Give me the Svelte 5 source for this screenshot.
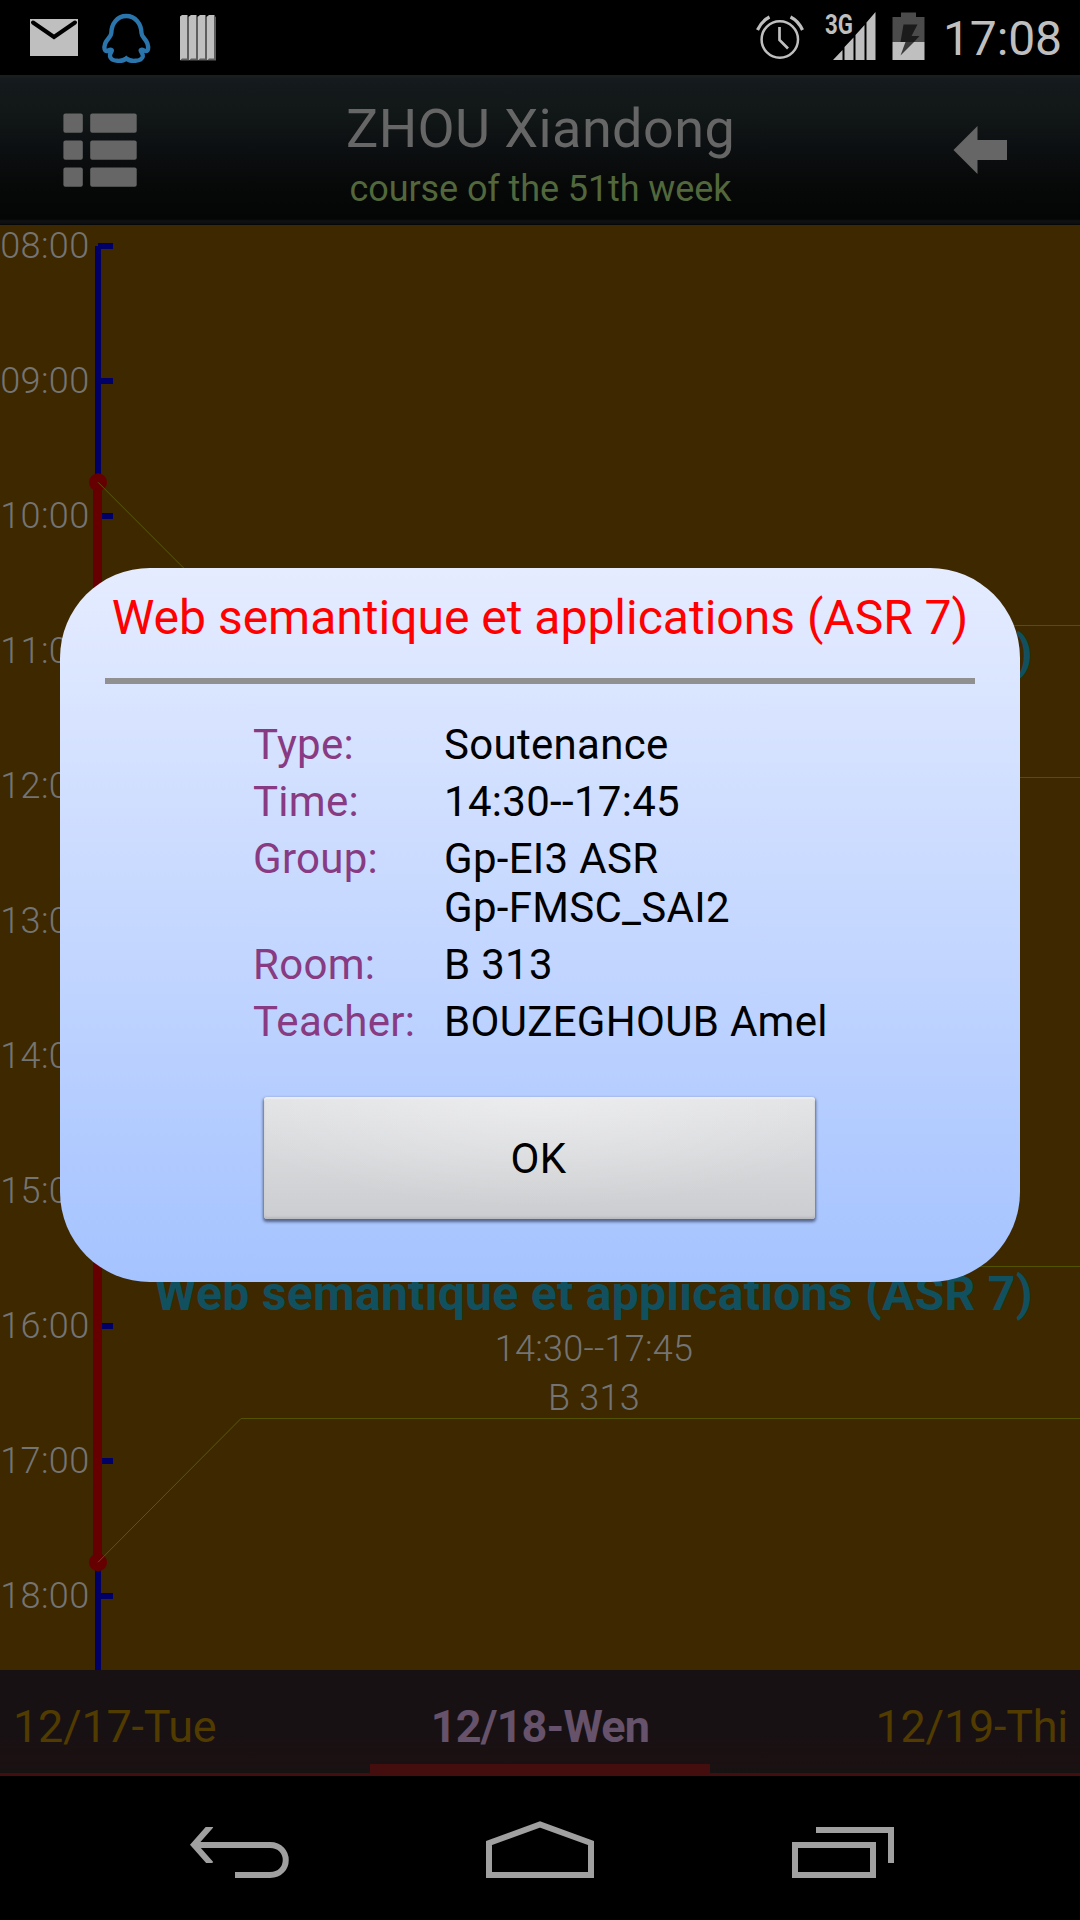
<script>
  // The day's axis starts at 08:00; one hour is 135px tall.
  const TOP = 21;
  const HOUR = 135;
  const AXIS = 98;
  const BEND = 241;
  const y = (h) => TOP + (h - 8) * HOUR;

  const hours = [8, 9, 10, 11, 12, 13, 14, 15, 16, 17, 18];
  const courses = [
    { name: 'Web semantique et applications (ASR 7)', info: [], from: 9.75, to: 13 },
    { name: 'Web semantique et applications (ASR 7)', info: ['14:30--17:45', 'B 313'], from: 14.5, to: 17.75 }
  ];
  const details = [
    { label: 'Type:', values: ['Soutenance'] },
    { label: 'Time:', values: ['14:30--17:45'] },
    { label: 'Group:', values: ['Gp-EI3 ASR', 'Gp-FMSC_SAI2'] },
    { label: 'Room:', values: ['B 313'] },
    { label: 'Teacher:', values: ['BOUZEGHOUB Amel'] }
  ];
  const pad = (h) => String(h).padStart(2, '0') + ':00';
</script>

<div class="screen">
  <div class="status">
    <svg class="left-icons" width="230" height="75" viewBox="0 0 230 75">
      <rect x="30" y="19" width="48" height="37" fill="#bfbfbf" />
      <path d="M33 22.5L54 37L75 22.5" fill="none" stroke="#000" stroke-width="4" stroke-linecap="round" />
      <path
        d="M126.3 16C117 16 111.5 24 111.3 33C111.3 37 107 38.5 105.2 43.5C103.5 48.5 104.8 51.3 107 51C108.700 50.800 110 49 111.500 50C113 51.300 109 53 110 56.500C111.500 62 122.500 61.800 126.300 58.500C130.200 61.800 141.200 62 142.800 56.500C143.600 53 139.500 51.300 141 50C142.500 49 144 50.800 145.600 51C148 51.300 149 48.500 147.400 43.500C145.600 38.500 141.500 37 141.500 33C141.200 24 135.500 16 126.300 16Z"
        fill="none" stroke="#2b75ad" stroke-width="4.4" />
      {#each [180, 189, 198, 207] as x}
        <path d="M{x} 16.500L{x + 2} 15H{x + 7.500}V60H{x}Z" fill="#bfbfbf" />
        <path d="M{x + 7.200} 15.500L{x + 9} 17V60.500H{x}L{x + 2} 58.500H{x + 7.200}Z" fill="#5d5d5d" />
      {/each}
    </svg>
    <div class="right-side">
      <svg width="180" height="75" viewBox="750.500 0 180 75">
        <g fill="none" stroke="#bfbfbf">
          <circle cx="779.300" cy="39.500" r="18.200" stroke-width="2.500" />
          <path d="M757 30Q761 21 769 17M802 30Q798 21 790 17" stroke-width="3.200" />
          <path d="M779 27L779 40L787.500 48.500" stroke-width="2.700" />
        </g>
        <text class="net" x="824.500" y="33.900" textLength="28" lengthAdjust="spacingAndGlyphs">3G</text>
        <g fill="#bfbfbf">
          <path d="M832.500 60L842 50V60ZM844 47L853 37.500V60H844ZM855 35L864 25V60H855ZM866 22.500L875 12V60H866Z" />
        </g>
        <path d="M892 42V17H900.500V12.500H915.500V17H924V42Z" fill="#4b4b4b" />
        <rect x="892" y="42" width="32" height="18" fill="#bfbfbf" />
        <path d="M903 24.500H917L911 36H919L913.500 42H900Z" fill="#1b1b1b" />
        <path d="M905 42H913.500L900 55.500Z" fill="#3a3a3a" />
      </svg>
      <span class="clock">17:08</span>
    </div>
  </div>

  <header>
    <svg class="list" width="74" height="75" viewBox="0 0 74 75" fill="#666">
      {#each [0, 27, 54] as r}
        <rect x="0.400" y={r + 0.400} width="19.400" height="19.400" rx="2" />
        <rect x="27.200" y={r + 0.400} width="46.500" height="19.400" rx="2" />
      {/each}
    </svg>
    <div class="heading">
      <h1>ZHOU Xiandong</h1>
      <p>course of the 51th week</p>
    </div>
    <svg class="back" width="54" height="50" viewBox="0 0 54 50" fill="#666">
      <path d="M0.500 25L24.500 1V15H54V35H24.500V49Z" />
    </svg>
  </header>

  <main>
    <svg width="1080" height="1445" viewBox="0 0 1080 1445">
      <path d="M98 21V1445" stroke="#000066" stroke-width="6" />
      {#each hours as h}
        <path d="M98 {y(h)}H113" stroke="#000066" stroke-width="6" />
        <text class="hour" x="0.300" y={y(h) + 12}>{pad(h)}</text>
      {/each}
      <path d="M97.500 {y(9.75)}V{y(17.75)}" stroke="#660000" stroke-width="9" />
      {#each courses as c}
        <circle cx="98" cy={y(c.from)} r="9" fill="#660000" />
        <circle cx="98" cy={y(c.to)} r="9" fill="#660000" />
        <path
          class="bracket"
          d="M{AXIS} {y(c.from)}L{BEND} {y(c.from) + 143.25}M{BEND} {y(c.to) - 143.75}L{AXIS} {y(c.to)}" />
        <rect class="edge" x={BEND} y={Math.round(y(c.from) + 142.7)} width="839" height="1" />
        <rect class="edge" x={BEND} y={Math.floor(y(c.to) - 143.75)} width="839" height="1" />
        <text class="course" x="593.500" y={y(c.from) + 186.500} textLength="878">{c.name}</text>
        {#each c.info as line, i}
          <text class="info" x="594" y={y(c.from) + 237.500 + i * 49}>{line}</text>
        {/each}
      {/each}
    </svg>
  </main>

  <div class="tabs">
    <span>12/17-Tue</span>
    <span class="current">12/18-Wen</span>
    <span class="last">12/19-Thi</span>
  </div>

  <nav>
    <svg width="1080" height="144" viewBox="0 1776 1080 144" fill="none" stroke="#a0a0a0" stroke-width="6">
      <path d="M211 1825.500L194 1844.700L211 1864" clip-path="url(#tip)" />
      <path d="M195 1845H270C291 1845 291 1875 270 1875H235" />
      <path d="M489 1875V1843L540 1824.500L591 1843V1875Z" />
      <path d="M795 1845H873V1875H795Z" />
      <path d="M816 1830H891V1863" />
      <clipPath id="tip"><rect x="185" y="1827" width="40" height="36" /></clipPath>
    </svg>
  </nav>

  <div class="dialog">
    <h2>Web semantique et applications (ASR 7)</h2>
    <dl>
      {#each details as d}
        <dt>{d.label}</dt>
        <dd>{#each d.values as v}<div>{v}</div>{/each}</dd>
      {/each}
    </dl>
    <button>OK</button>
  </div>
</div>

<style>
  :global(body) { background: #000; }
  .screen {
    position: relative;
    width: 1080px;
    height: 1920px;
    overflow: hidden;
    display: flex;
    flex-direction: column;
    background: #000;
    font-family: Roboto, "Liberation Sans", sans-serif;
  }
  svg { display: block; flex: none; }
  h1, h2, p, dl, dd { margin: 0; font-weight: 400; }

  .status { height: 75px; display: flex; justify-content: space-between; }
  .right-side { display: flex; padding-right: 18px; gap: 12px; color: #bfbfbf; }
  .clock { font-size: 48px; line-height: 78px; letter-spacing: -0.1px; white-space: nowrap; }
  .net { font-size: 28.5px; font-weight: 700; fill: #bfbfbf; }

  header {
    box-sizing: border-box;
    height: 150px;
    padding: 0 73px 0 63px;
    display: grid;
    grid-template-columns: 74px 1fr 54px;
    align-items: center;
    background: linear-gradient(#1b1f22 0, #141a1d 5px, #131919 28px, #0c0f11 75px, #070808 110px, #040505 144px, #101214 146px, #0a0c0e 149px, #030303 150px);
  }
  .heading { text-align: center; padding: 6px 9px 0 0; }
  h1 { color: #666; font-size: 54px; line-height: 63px; letter-spacing: 0.4px; white-space: nowrap; }
  p { color: #52683c; font-size: 36px; line-height: 42px; padding-top: 8px; white-space: nowrap; letter-spacing: -0.1px; }

  main { height: 1445px; background: #3d2800; }
  .hour { font-size: 36px; font-weight: 300; fill: #747474; letter-spacing: 0.35px; }
  .bracket { fill: none; stroke: #59590a; stroke-width: 1; }
  .edge { fill: #525200; }
  .course { font-size: 48px; font-weight: 700; fill: #11505e; text-anchor: middle; }
  .info { font-size: 36px; font-weight: 300; fill: #747474; letter-spacing: 0.25px; text-anchor: middle; }

  .tabs {
    box-sizing: border-box;
    height: 106px;
    padding: 0 12px 0 13px;
    display: grid;
    grid-template-columns: 357px 340px 1fr;
    background: linear-gradient(#171113 0, #171113 60px, #1b1012 90px, #171213 103px, #450e0e 103px);
    color: #513b00;
    font-size: 45px;
    line-height: 114px;
    letter-spacing: -0.25px;
    white-space: nowrap;
  }
  .current {
    color: #66526a;
    font-weight: 700;
    letter-spacing: -0.85px;
    text-align: center;
    height: 106px;
    background: linear-gradient(transparent 94px, #450e0e 94px);
  }
  .last { text-align: right; }

  nav { height: 144px; }

  .dialog {
    position: absolute;
    left: 60px;
    top: 568px;
    width: 960px;
    height: 714px;
    box-sizing: border-box;
    padding: 0 45px;
    border-radius: 90px;
    background: linear-gradient(#e5ecff, #a5c3ff);
    display: flex;
    flex-direction: column;
    align-items: center;
  }
  h2 {
    box-sizing: border-box;
    width: 870px;
    height: 116px;
    border-bottom: 6px solid #909090;
    color: #f00;
    font-size: 48px;
    line-height: 100px;
    text-align: center;
    white-space: nowrap;
  }
  dl {
    align-self: flex-start;
    margin: 36px 0 0 148px;
    display: grid;
    grid-template-columns: 191px auto;
    row-gap: 8px;
    font-size: 42px;
    line-height: 49px;
    letter-spacing: 0.3px;
    white-space: nowrap;
  }
  dt { color: #883a82; }
  dd { color: #000; }
  button {
    box-sizing: border-box;
    width: 551px;
    height: 122px;
    margin: 51px 2px 0 0;
    padding: 2px 1px 0 0;
    border: 0;
    border-radius: 3px;
    font: 400 42px/120px Roboto, sans-serif;
    letter-spacing: 0.3px;
    color: #000;
    background: radial-gradient(ellipse 60% 90% at 50% 0, rgba(255, 255, 255, 0.35), transparent), linear-gradient(#e2e3e5, #cccdd0);
    box-shadow: 0 2px 3px 1px rgba(40, 50, 75, 0.65), inset 0 2px 1px #ecedf0, inset 0 -2px 2px #b9babd;
  }
</style>
